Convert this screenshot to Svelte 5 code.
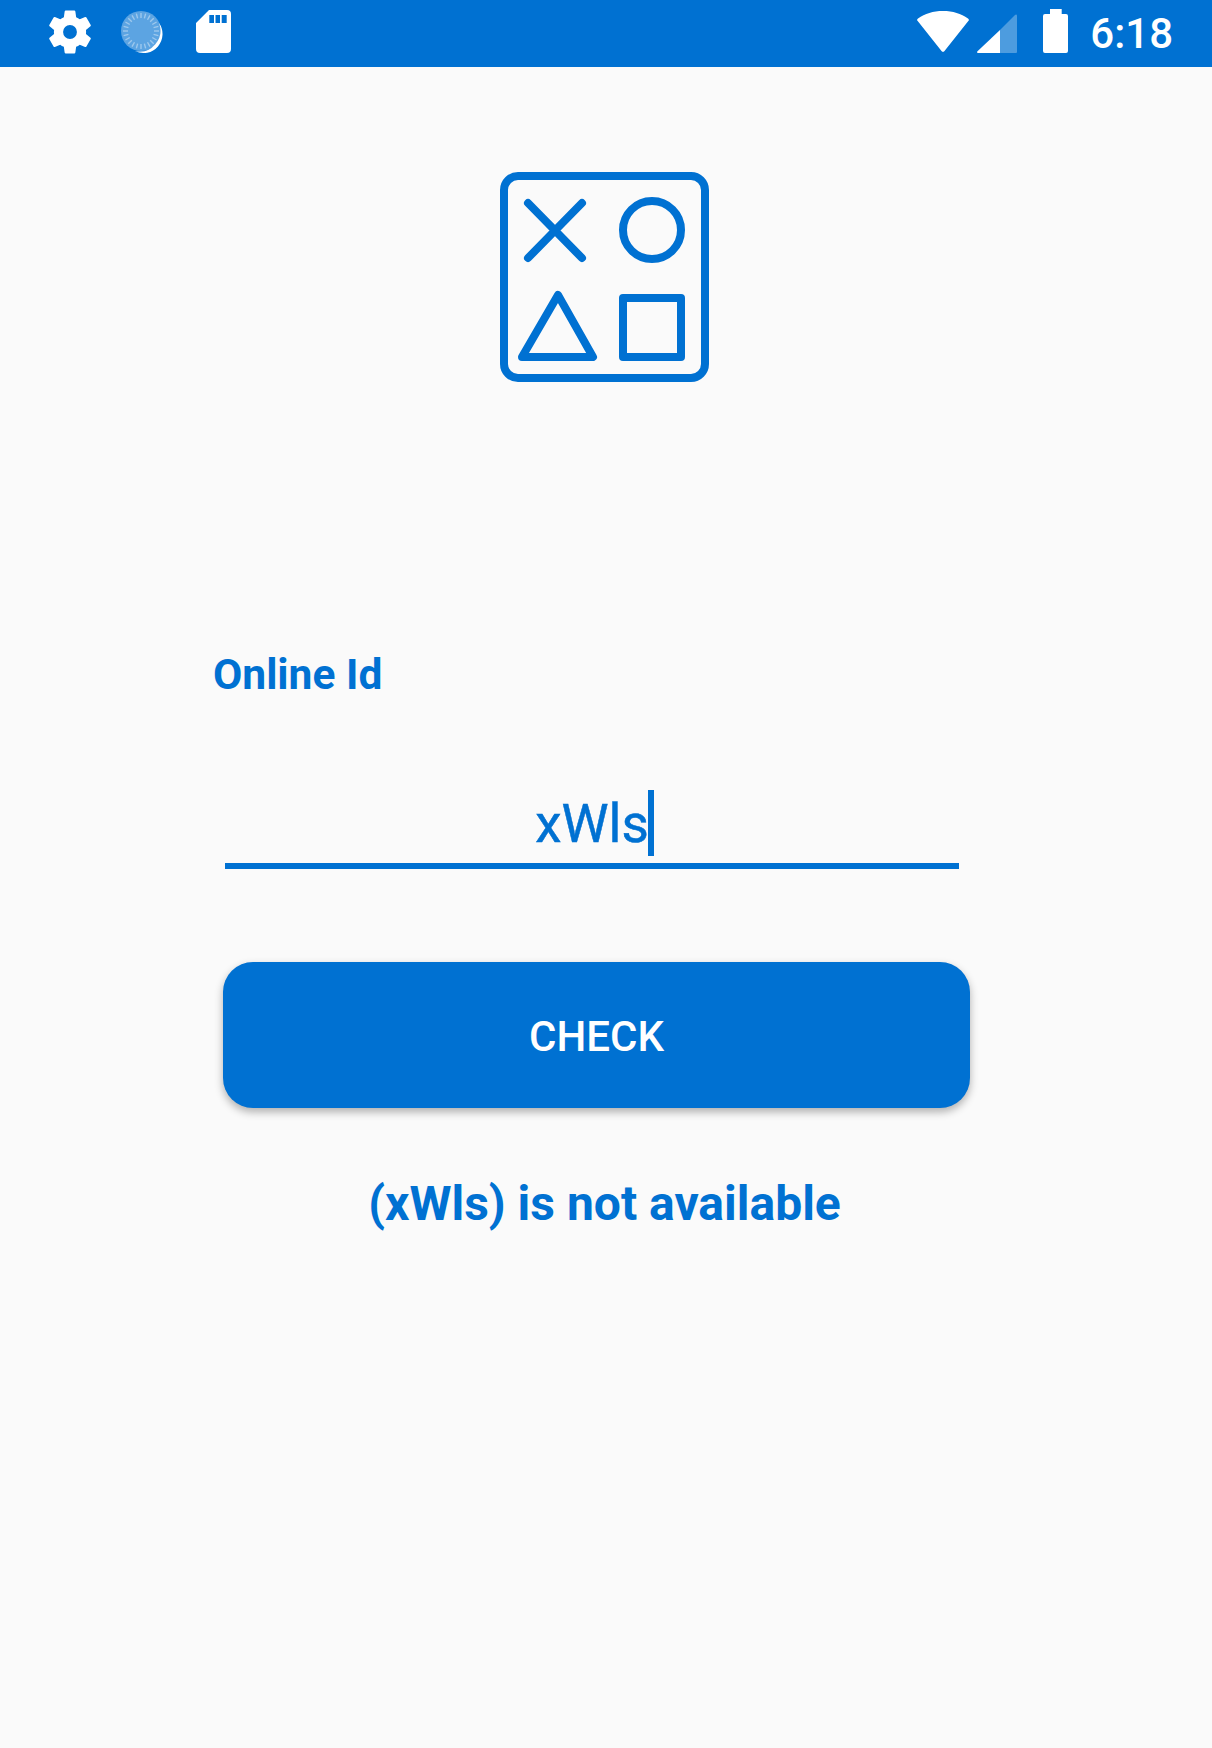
<script>
  const ticks = Array.from({ length: 24 }, (_, i) => i * 15);
</script>

<div class="screen">
  <!-- Status bar -->
  <header class="status-bar">
    <div class="status-left">
      <svg class="gear" viewBox="2.6 2.2 18.8 19.6" aria-hidden="true">
        <path fill-rule="evenodd" d="M19.14 12.94c.04-.3.06-.61.06-.94 0-.32-.02-.64-.07-.94l2.03-1.58c.18-.14.23-.41.12-.61l-1.92-3.32c-.12-.22-.37-.29-.59-.22l-2.39.96c-.5-.38-1.03-.7-1.62-.94l-.36-2.54c-.04-.24-.24-.41-.48-.41h-3.84c-.24 0-.43.17-.47.41l-.36 2.54c-.59.24-1.13.57-1.62.94l-2.39-.96c-.22-.08-.47 0-.59.22L2.74 8.87c-.12.21-.08.47.12.61l2.03 1.58c-.05.3-.09.63-.09.94s.02.64.07.94l-2.03 1.58c-.18.14-.23.41-.12.61l1.92 3.32c.12.22.37.29.59.22l2.39-.96c.5.38 1.03.7 1.62.94l.36 2.54c.05.24.24.41.48.41h3.84c.24 0 .44-.17.47-.41l.36-2.54c.59-.24 1.13-.56 1.62-.94l2.39.96c.22.08.47 0 .59-.22l1.92-3.32c.12-.22.07-.47-.12-.61l-2.01-1.58zM12 15.100a3.100 3.100 0 1 1 0-6.200 3.100 3.100 0 0 1 0 6.200z" fill="#fff"/>
      </svg>
      <svg class="spinner" viewBox="0 0 42 44" aria-hidden="true">
        <circle cx="20" cy="21" r="20" fill="#fff" opacity="0.36"/>
        {#each ticks as a}
          <line x1="20" y1="3" x2="20" y2="8" stroke="#fff" stroke-width="1.400" opacity="0.4" transform="rotate({a} 20 21)"/>
        {/each}
        <path d="M38 13A19 19 0 0 1 14 41A21 21 0 0 0 38 13z" fill="#fff"/>
      </svg>
      <svg class="sd" viewBox="0 0 35 44" aria-hidden="true">
        <path fill-rule="evenodd" d="M13 0H31a4 4 0 0 1 4 4V39a4 4 0 0 1-4 4H4a4 4 0 0 1-4-4V13zM13.300 5v8h4.700V5zM19.500 5v8h4.500V5zM25.700 5v8h5V5z" fill="#fff"/>
      </svg>
    </div>
    <div class="status-right">
      <svg class="wifi" viewBox="0 0 52 42" aria-hidden="true">
        <path d="M1 7.500C8 2.500 16 0 26 0s18 2.500 25 7.500c1 .8 1.200 1.500.5 2.300L27.500 40a2 2 0 0 1-3 0L.5 9.800C-.2 9 0 8.300 1 7.500z" fill="#fff"/>
      </svg>
      <svg class="signal" viewBox="0 0 40 40" aria-hidden="true">
        <path d="M23 17 38 2c1-1 2-.5 2 1V39a1 1 0 0 1-1 1H23z" fill="#fff" opacity="0.3"/>
        <path d="M23 17V40H1c-1 0-1.300-1-.5-1.800z" fill="#fff"/>
      </svg>
      <svg class="battery" viewBox="0 0 25 44" aria-hidden="true">
        <path d="M7 0h11.700v5H23a2 2 0 0 1 2 2V42a2 2 0 0 1-2 2H2a2 2 0 0 1-2-2V7a2 2 0 0 1 2-2h5z" fill="#fff"/>
      </svg>
      <span class="time">6:18</span>
    </div>
  </header>

  <main class="content">
    <!-- Logo -->
    <svg class="logo" viewBox="498 168 216 218" fill="none" aria-hidden="true">
      <rect x="504" y="176" width="201" height="202" rx="14"/>
      <path d="M528 203 582 258M582 203 528 258"/>
      <circle cx="652" cy="230" r="29"/>
      <path d="M558 295 593 357H522z"/>
      <rect x="623" y="298" width="58" height="59"/>
    </svg>

    <p class="label">Online Id</p>

    <div class="field">
      <span class="field-text">xWls<span class="caret"></span></span>
    </div>

    <button class="check" type="button">CHECK</button>

    <p class="message">(xWls) is not available</p>
  </main>
</div>

<style>
  :global(body) {
    background: #fafafa;
  }

  .screen {
    min-height: 1748px;
    font-family: Roboto, "Liberation Sans", sans-serif;
    color: #0071d2;
    background: #fafafa;
  }

  .status-bar {
    height: 67px;
    background: #0071d2;
    display: flex;
    justify-content: space-between;
    align-items: flex-start;
    padding: 0 39px 0 49px;
  }

  .status-left,
  .status-right {
    display: flex;
    align-items: flex-start;
  }

  .gear { width: 42px; height: 44px; margin-top: 10px; }
  .spinner { width: 42px; height: 44px; margin: 10px 0 0 30px; }
  .sd { width: 35px; height: 44px; margin: 10px 0 0 33px; }

  .wifi { width: 52px; height: 42px; margin-top: 11px; }
  .signal { width: 40px; height: 40px; margin: 13px 0 0 8px; }
  .battery { width: 25px; height: 44px; margin: 9px 0 0 26px; }

  .time {
    margin-left: 22px;
    margin-top: 9px;
    font-size: 42px;
    line-height: 49px;
    font-weight: 500;
    color: #fff;
  }

  .content {
    display: flex;
    flex-direction: column;
  }

  .logo {
    align-self: center;
    width: 216px;
    height: 218px;
    margin-top: 101px;
    stroke: #0071d2;
    stroke-width: 8;
    stroke-linecap: round;
    stroke-linejoin: round;
  }

  .label {
    margin: 264px 0 0 213px;
    font-size: 42.500px;
    line-height: 50px;
    font-weight: 700;
  }

  .field {
    margin: 92px 0 0 225px;
    width: 734px;
    height: 71px;
    border-bottom: 6px solid #0071d2;
    display: flex;
    justify-content: center;
    align-items: flex-end;
  }

  .field-text {
    position: relative;
    font-size: 53px;
    line-height: 62px;
    -webkit-text-stroke: 0.5px #0071d2;
    margin-bottom: 8px;
  }

  .caret {
    position: absolute;
    left: 100%;
    margin-left: -1px;
    top: -3px;
    width: 6px;
    height: 66px;
    background: #0071d2;
  }

  .check {
    margin: 93px 0 0 223px;
    width: 747px;
    height: 146px;
    border: none;
    border-radius: 30px;
    padding: 3px 0 0;
    background: #0071d2;
    color: #fff;
    font-family: inherit;
    font-size: 42px;
    font-weight: 500;
    box-shadow: 0 4px 8px rgba(0, 0, 0, 0.3);
  }

  .message {
    margin: 68px 0 0 -3px;
    text-align: center;
    font-size: 48px;
    line-height: 56px;
    font-weight: 700;
  }
</style>
